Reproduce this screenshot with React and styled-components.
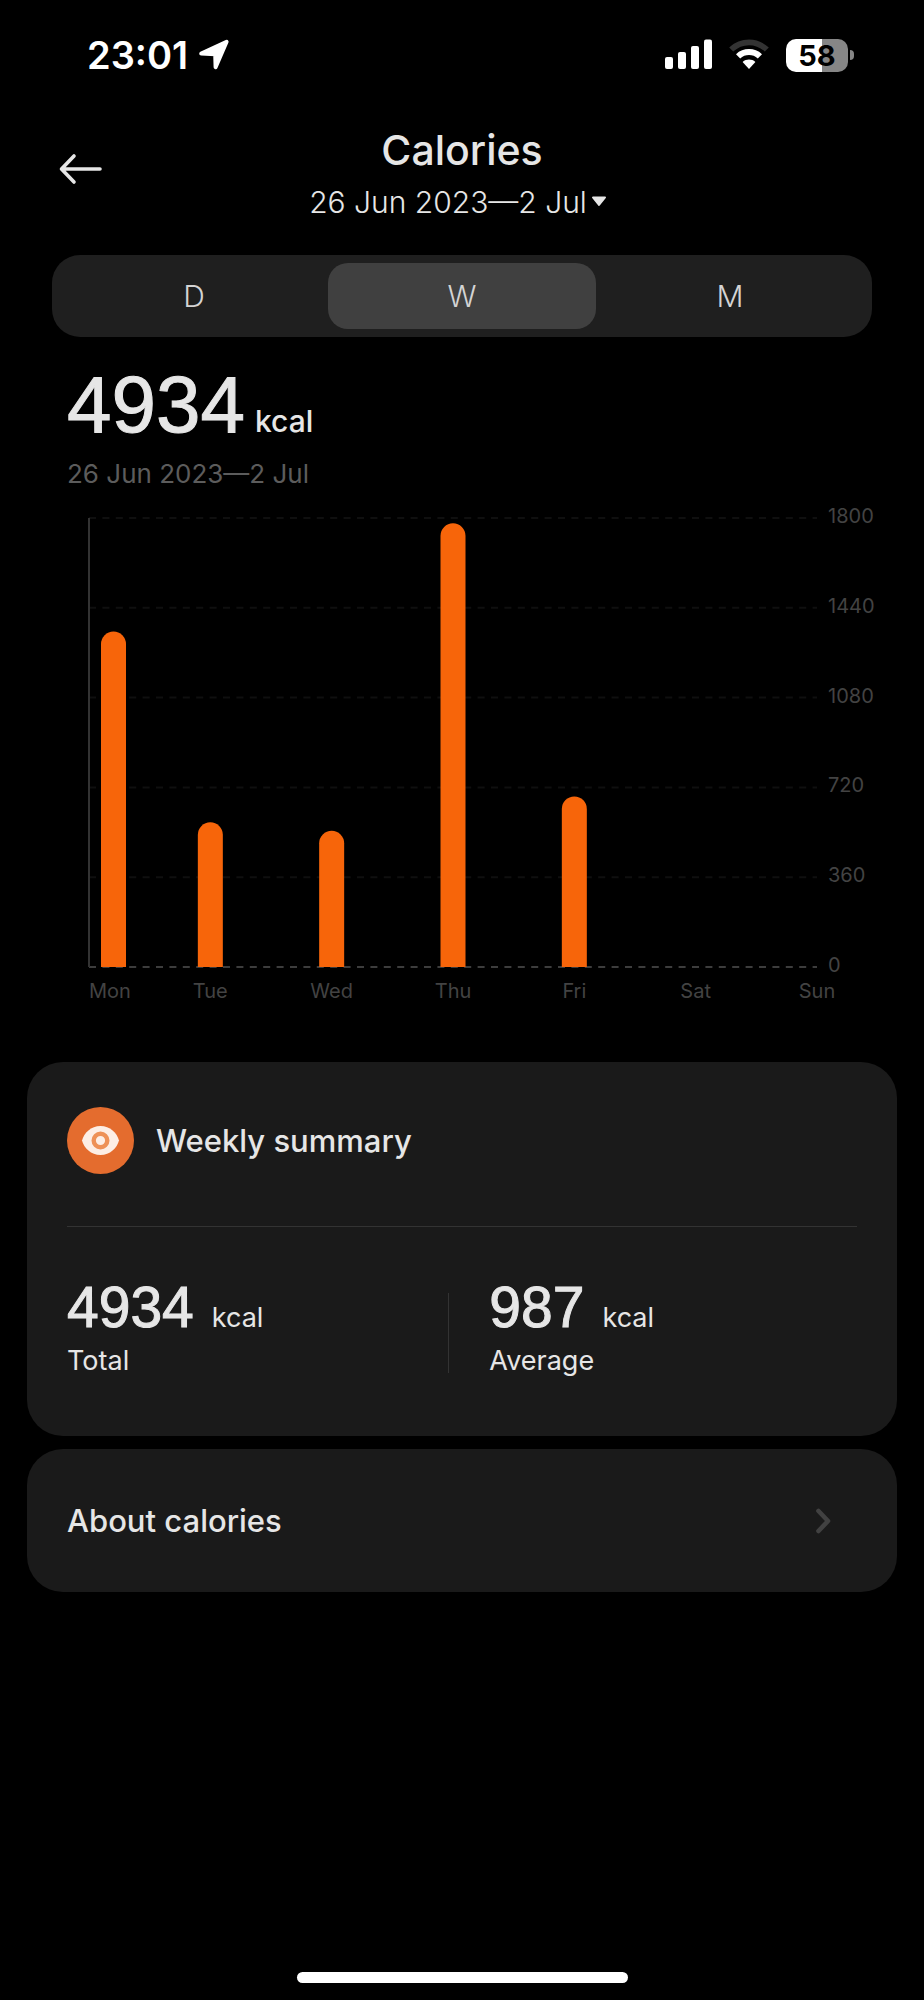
import { useState } from "react";
import styled, { createGlobalStyle } from "styled-components";

const RANGE = "26 Jun 2023—2 Jul";

const TABS = ["D", "W", "M"];

const DAYS = [
  { day: "Mon", kcal: 1345 },
  { day: "Tue", kcal: 580 },
  { day: "Wed", kcal: 546 },
  { day: "Thu", kcal: 1779 },
  { day: "Fri", kcal: 684 },
  { day: "Sat", kcal: 0 },
  { day: "Sun", kcal: 0 },
];

const TICKS = [1800, 1440, 1080, 720, 360, 0];

const total = DAYS.reduce((sum, d) => sum + d.kcal, 0);
const average = Math.round(total / DAYS.filter((d) => d.kcal > 0).length);

const StatusIcons = () => (
  <StatusGroup>
    <svg width="48" height="32" viewBox="0 0 48 32" fill="#fff" aria-hidden="true">
      <rect x="1" y="18" width="8" height="12" rx="2" />
      <rect x="14" y="13" width="8" height="17" rx="2" />
      <rect x="27" y="7" width="8" height="23" rx="2" />
      <rect x="40" y="0.5" width="8" height="29.5" rx="2" />
    </svg>
    <svg width="42" height="32" viewBox="0 0 42 32" aria-hidden="true">
      <path d="M1.2 8.6C12 -2.2 30 -2.2 40.8 8.6L36.8 12.6C28 4 14 4 5.2 12.6Z" fill="#333" />
      <path d="M8 15.2C15.2 8.4 26.8 8.4 34 15.2L29.8 19.4C25 14.8 17 14.8 12.2 19.4Z" fill="#fff" />
      <path d="M14.6 23C18.2 19.8 23.8 19.8 27.4 23L21 30Z" fill="#fff" />
    </svg>
    <Battery>
      <BatteryBody>58</BatteryBody>
      <BatteryCap />
    </Battery>
  </StatusGroup>
);

const Chart = () => {
  const left = 89;
  const right = 817;
  const top = 28;
  const bottom = 477;
  const step = (right - left) / 6;
  const barWidth = 25;

  const yOf = (v) => bottom - ((bottom - top) * v) / 1800;

  return (
    <ChartSvg viewBox="0 0 924 530" role="img" aria-label="Calories per day">
      {TICKS.map((t) => (
        <g key={t}>
          <line
            x1={left}
            x2={right}
            y1={yOf(t)}
            y2={yOf(t)}
            stroke={t === 0 ? "#3d3d3d" : "#0f0f0f"}
            strokeWidth="2"
            strokeDasharray="7 6.4"
          />
          <AxisText x="828" y={yOf(t) + 5}>
            {t}
          </AxisText>
        </g>
      ))}
      <line x1={left} x2={left} y1={top} y2={bottom} stroke="#333" strokeWidth="2" />
      {DAYS.map(({ day, kcal }, i) => {
        const x = left + step * i;
        // the first bar is pushed right so it stays clear of the axis
        const barX = i === 0 ? left + 12 : x - barWidth / 2;
        const y = yOf(kcal);
        const r = barWidth / 2;
        return (
          <g key={day}>
            {kcal > 0 && (
              <path
                d={`M${barX} ${bottom}V${y + r}a${r} ${r} 0 0 1 ${barWidth} 0V${bottom}Z`}
                fill="#f7650a"
              />
            )}
            <AxisText x={i === 0 ? left : x} y="508" textAnchor={i === 0 ? "start" : "middle"}>
              {day}
            </AxisText>
          </g>
        );
      })}
    </ChartSvg>
  );
};

const Stat = ({ value, label }) => (
  <StatBox>
    <StatLine>
      <StatValue>{value}</StatValue>
      <StatUnit>kcal</StatUnit>
    </StatLine>
    <StatLabel>{label}</StatLabel>
  </StatBox>
);

const App = () => {
  const [tab, setTab] = useState("W");

  return (
    <Page>
      <GlobalStyle />
      <StatusBar>
        <Clock>
          23:01
          <svg width="32" height="32" viewBox="0 0 32 32" aria-hidden="true">
            <path
              d="M28.6 2.8L17.6 28.2L17.2 15.2L3.2 14.6Z"
              fill="#fff"
              stroke="#fff"
              strokeWidth="4"
              strokeLinejoin="round"
            />
          </svg>
        </Clock>
        <StatusIcons />
      </StatusBar>

      <Header>
        <BackButton aria-label="Back">
          <svg width="44" height="32" viewBox="0 0 44 32" fill="none" aria-hidden="true">
            <path
              d="M41 16H3M15 3L2.5 16L15 29"
              stroke="#e6e6e6"
              strokeWidth="3.6"
              strokeLinecap="round"
              strokeLinejoin="round"
            />
          </svg>
        </BackButton>
        <Heading>
          <Title>Calories</Title>
          <RangeButton>
            {RANGE}
            <svg width="16" height="12" viewBox="0 0 16 12" aria-hidden="true">
              <path d="M2 1.5H14L8 9Z" fill="#e6e6e6" stroke="#e6e6e6" strokeWidth="2" strokeLinejoin="round" />
            </svg>
          </RangeButton>
        </Heading>
      </Header>

      <Tabs role="tablist">
        {TABS.map((t) => (
          <Tab key={t} role="tab" aria-selected={t === tab} $active={t === tab} onClick={() => setTab(t)}>
            {t}
          </Tab>
        ))}
      </Tabs>

      <Hero>
        <HeroLine>
          <HeroValue>{total}</HeroValue>
          <HeroUnit>kcal</HeroUnit>
        </HeroLine>
        <HeroRange>{RANGE}</HeroRange>
      </Hero>

      <Chart />

      <Cards>
        <Card>
          <CardHead>
            <svg width="67" height="67" viewBox="0 0 67 67" aria-hidden="true">
              <circle cx="33.5" cy="33.5" r="33.5" fill="#e46c2e" />
              <path
                d="M15 33.5C17 26 24 19 33.5 19S50 26 52 33.5C50 41 43 48 33.5 48S17 41 15 33.5Z"
                fill="#fdeee5"
              />
              <circle cx="33.5" cy="33.5" r="6.8" fill="#fdeee5" stroke="#ee9157" strokeWidth="4.4" />
            </svg>
            <CardTitle>Weekly summary</CardTitle>
          </CardHead>
          <Stats>
            <Stat value={total} label="Total" />
            <StatDivider />
            <Stat value={average} label="Average" />
          </Stats>
        </Card>
        <LinkCard href="#about">
          <CardTitle>About calories</CardTitle>
          <svg width="16" height="26" viewBox="0 0 16 26" fill="none" aria-hidden="true">
            <path
              d="M3.5 3L13 13L3.5 23"
              stroke="#414141"
              strokeWidth="4.6"
              strokeLinecap="round"
              strokeLinejoin="round"
            />
          </svg>
        </LinkCard>
      </Cards>

      <HomeIndicator />
    </Page>
  );
};

export default App;

const GlobalStyle = createGlobalStyle`
  * {
    box-sizing: border-box;
  }

  body {
    margin: 0;
    background: #000;
    color: #e6e6e6;
    font-family: Inter, "Liberation Sans", sans-serif;
  }

  h1, h2, p {
    margin: 0;
  }

  button {
    padding: 0;
    border: none;
    background: none;
    color: inherit;
    font-family: inherit;
    cursor: pointer;
  }

  svg {
    display: block;
    flex-shrink: 0;
  }
`;

const Page = styled.div`
  display: flex;
  flex-direction: column;
  min-height: 100vh;
`;

const StatusBar = styled.div`
  display: flex;
  align-items: center;
  justify-content: space-between;
  height: 110px;
  padding: 0 70px 0 87px;
`;

const Clock = styled.div`
  display: flex;
  align-items: center;
  gap: 10px;
  color: #fff;
  font-size: 38px;
  font-weight: 600;
`;

const StatusGroup = styled.div`
  display: flex;
  align-items: center;
  gap: 16px;
`;

const Battery = styled.div`
  display: flex;
  align-items: center;
  gap: 2px;
`;

const BatteryBody = styled.div`
  width: 62px;
  height: 33px;
  border-radius: 10px;
  background: linear-gradient(to right, #fff 58%, #868686 58%);
  color: #000;
  font-size: 29px;
  font-weight: 700;
  line-height: 33px;
  text-align: center;
`;

const BatteryCap = styled.div`
  width: 4px;
  height: 10px;
  border-radius: 0 4px 4px 0;
  background: #868686;
`;

const Header = styled.header`
  display: grid;
  grid-template-columns: 44px 1fr 44px;
  align-items: start;
  padding: 16px 59px 0;
`;

const BackButton = styled.button`
  display: flex;
  align-items: center;
  height: 86px;
`;

const Heading = styled.div`
  display: flex;
  flex-direction: column;
  align-items: center;
  gap: 8px;
`;

const Title = styled.h1`
  font-size: 41px;
  font-weight: 500;
  line-height: 48px;
`;

const RangeButton = styled.button`
  display: flex;
  align-items: center;
  gap: 4px;
  padding-right: 8px;
  font-size: 30px;
  font-weight: 300;
  line-height: 40px;
`;

const Tabs = styled.div`
  display: flex;
  margin: 33px 52px 0;
  padding: 8px;
  border-radius: 28px;
  background: #1f1f1f;
`;

const Tab = styled.button`
  flex: 1;
  height: 66px;
  border-radius: 20px;
  background: ${({ $active }) => ($active ? "#404040" : "transparent")};
  color: #d4d4d4;
  font-size: 30px;
  font-weight: 300;
`;

const Hero = styled.section`
  display: flex;
  flex-direction: column;
  gap: 15px;
  padding: 30px 67px 0;
`;

const HeroLine = styled.div`
  display: flex;
  align-items: baseline;
  gap: 10px;
`;

/* the big figures use the narrower face, thickened a little */
const Figure = styled.span`
  font-family: "Liberation Sans", Arial, sans-serif;
  font-weight: 400;
  -webkit-text-stroke: 1px currentColor;
`;

const HeroValue = styled(Figure)`
  font-size: 80px;
  line-height: 76px;
`;

const HeroUnit = styled.span`
  font-size: 30px;
  font-weight: 500;
`;

const HeroRange = styled.p`
  color: #5c5c5c;
  font-size: 26px;
  font-weight: 400;
  line-height: 32px;
`;

const ChartSvg = styled.svg`
  width: 100%;
`;

const AxisText = styled.text`
  fill: #434343;
  font-size: 20px;
  font-weight: 400;
`;

const Cards = styled.div`
  display: flex;
  flex-direction: column;
  gap: 13px;
  padding: 42px 27px 0;
`;

const Card = styled.section`
  padding: 45px 40px 59px;
  border-radius: 36px;
  background: #1a1a1a;
`;

const LinkCard = styled.a`
  display: flex;
  align-items: center;
  justify-content: space-between;
  height: 143px;
  padding: 0 66px 0 40px;
  border-radius: 36px;
  background: #1a1a1a;
  color: inherit;
  text-decoration: none;
`;

const CardHead = styled.div`
  display: flex;
  align-items: center;
  gap: 22px;
  padding-bottom: 52px;
  border-bottom: 1px solid #333;
`;

const CardTitle = styled.h2`
  font-size: 31px;
  font-weight: 500;
  line-height: 40px;
`;

const Stats = styled.div`
  display: grid;
  grid-template-columns: 29fr 1px 31fr;
  padding-top: 52px;
`;

const StatDivider = styled.div`
  align-self: end;
  height: 80px;
  margin-bottom: 4px;
  background: #333;
`;

const StatBox = styled.div`
  display: flex;
  flex-direction: column;
  gap: 10px;

  &:last-child {
    padding-left: 40px;
  }
`;

const StatLine = styled.div`
  display: flex;
  align-items: baseline;
  gap: 18px;
`;

const StatValue = styled(Figure)`
  font-size: 57px;
  line-height: 56px;
`;

const StatUnit = styled.span`
  font-size: 27px;
  font-weight: 400;
`;

const StatLabel = styled.p`
  font-size: 27px;
  font-weight: 400;
  line-height: 32px;
`;

const HomeIndicator = styled.div`
  width: 331px;
  height: 11px;
  margin: auto auto 17px;
  border-radius: 6px;
  background: #fff;
`;
